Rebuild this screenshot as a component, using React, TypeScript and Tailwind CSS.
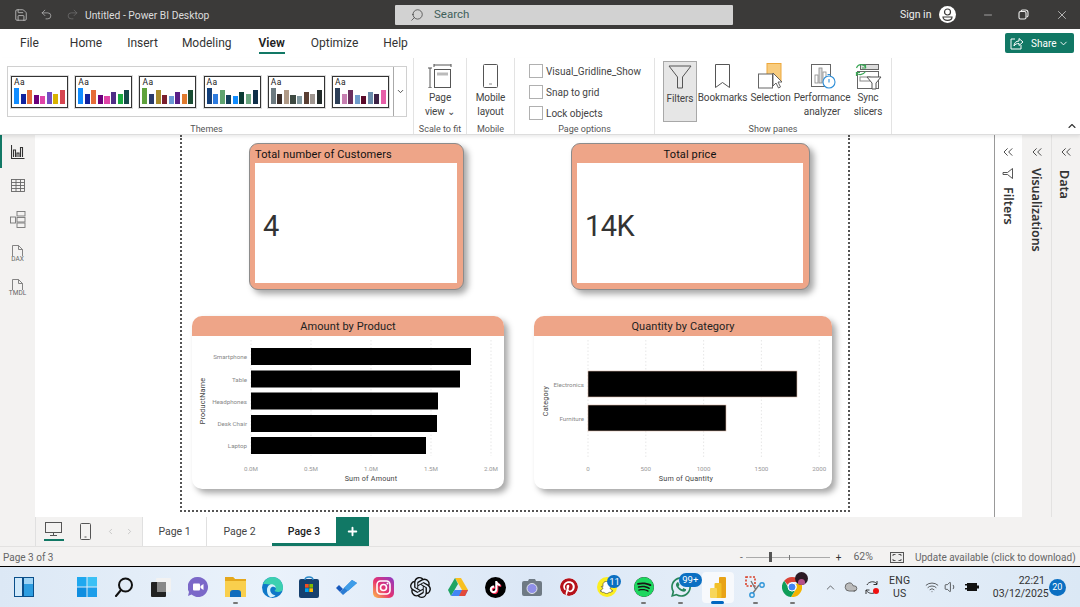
import React from "react";
import { Save, Undo2, Redo2, Search, Minus, X, ChevronDown, ChevronUp, ChevronsLeft, Plus, ChevronLeft, ChevronRight, Wifi, Volume1, Cloud } from "lucide-react";
import { SiOpenai, SiTiktok, SiSpotify, SiSnapchat, SiPinterest, SiWhatsapp } from "react-icons/si";

const themes: { c: string[] }[] = [
  { c: ["#118DFF", "#12239E", "#E66C37", "#6B007B", "#E044A7", "#744EC2", "#D9B300", "#D64550"] },
  { c: ["#118DFF", "#12239E", "#E66C37", "#6B007B", "#E044A7", "#4F2E86", "#1AAB40", "#15494A"] },
  { c: ["#5FA23C", "#2A3B6B", "#A88B2B", "#7A1F2E", "#6A9BD6", "#5A1F87", "#E07B2E", "#1A4D33"] },
  { c: ["#123F7A", "#2E7CE0", "#5FA36F", "#123F5A", "#118DFF", "#0B3A33", "#6AA57F", "#0F2F4A"] },
  { c: ["#6C7A80", "#3B2E2A", "#B09A87", "#3E4A42", "#8199A0", "#5A3F33", "#9F9690", "#222B2A"] },
  { c: ["#2C3E57", "#C77FB1", "#6B2F5E", "#6F9CCB", "#5B0A2A", "#6A8CAC", "#3E2346", "#E75FA8"] },
];
const barH = [16, 10, 14, 9, 8, 12, 10, 14];

function ThemeCard({ c }: { c: string[] }) {
  return (
    <div className="w-[57px] h-[32px] border border-[#333] bg-white flex flex-col px-[2px] shadow-[0_0_0_1px_#ddd]">
      <div className="text-[8.5px] leading-[11px] text-[#222] tracking-[0.5px] h-[11px]">Aa</div>
      <div className="flex items-end gap-[1.5px] h-[16px]">
        {c.map((x, i) => (
          <div key={i} className="flex-1" style={{ background: x, height: barH[i] }} />
        ))}
      </div>
    </div>
  );
}

function Group({ w, label, children }: { w: string; label: string; children: React.ReactNode }) {
  return (
    <div className={`${w} h-full flex flex-col border-r border-[#e3e3e3] shrink-0`}>
      <div className="h-[65px] flex">{children}</div>
      <div className="h-[12px] text-center text-[9px] leading-[14px] text-[#555]">{label}</div>
    </div>
  );
}

function Chk({ label }: { label: string }) {
  return (
    <div className="flex items-center h-[14px] gap-[3px]">
      <div className="w-[14px] h-[14px] border border-[#b0b0b0] bg-white" />
      <span className="mt-[1px] text-[10px] text-[#444]">{label}</span>
    </div>
  );
}

function Pane({ w, icon, l1, l2, active }: { w: string; icon: React.ReactNode; l1: string; l2?: string; active?: boolean }) {
  return (
    <div className={`${w} flex flex-col items-center h-[61px] mt-[3px] pt-[3px] ${active ? "bg-[#e6e6e6] border border-[#a8a8a8]" : ""}`}>
      <div className="h-[24px] flex items-center justify-center">{icon}</div>
      <div className="mt-[3px] text-[10px] leading-[14px] tracking-[-0.1px] text-[#444] text-center whitespace-nowrap">
        {l1}
        {l2 && <br />}
        {l2}
      </div>
    </div>
  );
}

function Card({ title, value, w, left, center }: { title: string; value: string; w: string; left: string; center?: boolean }) {
  return (
    <div className={`${w} ${left} h-[147px] shrink-0 rounded-[9px] bg-[#eea588] border border-[#8c8c8c] pl-[5px] pr-[6px] pb-[6px] flex flex-col shadow-[4px_4px_6px_rgba(0,0,0,0.35)]`}>
      <div className={`h-[19px] text-[11px] leading-[21px] tracking-[0.12px] text-[#111] ${center ? "text-center" : ""}`}>{title}</div>
      <div className="flex-1 bg-white flex items-center pl-[8px] pt-[8px] text-[29px] tracking-[-0.5px] text-[#333]">{value}</div>
    </div>
  );
}

const T = { fontFamily: "Roboto, sans-serif" };

function ChartOne() {
  const rows: [string, number, number][] = [
    ["Smartphone", 12, 220],
    ["Table", 34.5, 209],
    ["Headphones", 56.5, 187],
    ["Desk Chair", 79, 186],
    ["Laptop", 101, 175],
  ];
  const ticks = ["0.0M", "0.5M", "1.0M", "1.5M", "2.0M"];
  return (
    <svg width={312} height={153} viewBox="0 0 312 153" style={T}>
      {ticks.map((t, i) => (
        <g key={t}>
          <line x1={59 + i * 60} x2={59 + i * 60} y1={4} y2={120} stroke="#ddd" strokeWidth={0.7} strokeDasharray="1.5 2" />
          <text x={59 + i * 60} y={135} textAnchor="middle" fontSize={6.2} fill="#999">{t}</text>
        </g>
      ))}
      {rows.map(([n, y, w]) => (
        <g key={n}>
          <rect x={59} y={y} width={w} height={17} fill="#000" />
          <text x={55} y={y + 11} textAnchor="end" fontSize={6.2} fill="#888">{n}</text>
        </g>
      ))}
      <text x={179} y={145} textAnchor="middle" fontSize={7.2} fill="#444" letterSpacing={0.2}>Sum of Amount</text>
      <text transform="translate(12.5 65) rotate(-90)" textAnchor="middle" fontSize={7.2} fill="#444" letterSpacing={0.2}>ProductName</text>
    </svg>
  );
}

function ChartTwo() {
  const ticks = ["0", "500", "1000", "1500", "2000"];
  return (
    <svg width={298} height={153} viewBox="0 0 298 153" style={T}>
      {ticks.map((t, i) => (
        <g key={t}>
          <line x1={54 + i * 57.8} x2={54 + i * 57.8} y1={4} y2={122} stroke="#ddd" strokeWidth={0.7} strokeDasharray="1.5 2" />
          <text x={54 + i * 57.8} y={135} textAnchor="middle" fontSize={6.2} fill="#999">{t}</text>
        </g>
      ))}
      <rect x={54} y={35} width={209} height={26} fill="#000" stroke="#d9b8a8" strokeWidth={0.6} />
      <rect x={54} y={69} width={138} height={26} fill="#000" stroke="#d9b8a8" strokeWidth={0.6} />
      <text x={50} y={51} textAnchor="end" fontSize={6.2} fill="#888">Electronics</text>
      <text x={50} y={85} textAnchor="end" fontSize={6.2} fill="#888">Furniture</text>
      <text x={152} y={145} textAnchor="middle" fontSize={7.2} fill="#444" letterSpacing={0.2}>Sum of Quantity</text>
      <text transform="translate(13.5 65) rotate(-90)" textAnchor="middle" fontSize={7.2} fill="#444" letterSpacing={0.2}>Category</text>
    </svg>
  );
}

function ChartCard({ title, w, ml, children }: { title: string; w: string; ml: string; children: React.ReactNode }) {
  return (
    <div className={`${w} ${ml} h-[173px] shrink-0 rounded-[10px] bg-white overflow-hidden flex flex-col shadow-[4px_4px_6px_rgba(0,0,0,0.35)]`}>
      <div className="h-[20px] bg-[#eea588] text-center text-[11px] leading-[21px] tracking-[0.08px] text-[#222]">{title}</div>
      {children}
    </div>
  );
}

function Cell({ children, dot, active }: { children: React.ReactNode; dot?: boolean; active?: boolean }) {
  return (
    <div className="relative w-[37.15px] h-[40px] shrink-0 flex items-center justify-center">
      {active && <div className="absolute left-[3px] right-[3px] top-[5px] bottom-[4px] rounded-[4px] bg-[#f7f9fc]" />}
      {children}
      {dot && <div className="absolute bottom-[3px] w-[5px] h-[2px] rounded bg-[#777]" />}
      {active && <div className="absolute bottom-[3px] w-[13px] h-[3px] rounded bg-[#0067c0]" />}
    </div>
  );
}

function Badge({ text, pos }: { text: string; pos: string }) {
  return (
    <div className={`absolute ${pos} rounded-full bg-[#0b6fc2] text-white text-[9.5px] leading-[13px] text-center`}>{text}</div>
  );
}

export default function App() {
  return (
    <div className="w-[1080px] h-[607px] overflow-hidden flex flex-col bg-[#f3f2f1] font-[Roboto,sans-serif]">
      {/* title bar */}
      <div className="h-[29px] bg-[#3b3a39] flex items-center text-[#e6e6e6] shrink-0">
        <Save size={14} strokeWidth={1.2} className="ml-[14px] text-[#ddd]" />
        <Undo2 size={13} strokeWidth={1.2} className="ml-[12px] text-[#ccc]" />
        <Redo2 size={13} strokeWidth={1.2} className="ml-[13px] text-[#777]" />
        <span className="ml-[6px] mt-[2px] text-[10.3px] text-[#ddd] w-[123px] whitespace-nowrap">Untitled - Power BI Desktop</span>
        <div className="ml-[187px] w-[338px] h-[20px] bg-[#d2d2d2] rounded-[1px] flex items-center pl-[15px] text-[#3f5f5a] text-[11.5px]">
          <Search size={14} strokeWidth={1.2} className="-scale-x-100 text-[#333]" />
          <span className="ml-[10px] mt-[1px]">Search</span>
        </div>
        <span className="ml-[167px] mt-[1px] text-[10.5px] text-[#eee]">Sign in</span>
        <svg width="17" height="17" viewBox="0 0 17 17" className="ml-[8px]">
          <circle cx="8.5" cy="8.5" r="8.5" fill="#fff" />
          <circle cx="8.5" cy="6" r="3" fill="none" stroke="#3b3a39" strokeWidth="1.2" />
          <path d="M4 11h9c0 2-2 3.4-4.5 3.4S4 13 4 11z" fill="none" stroke="#3b3a39" strokeWidth="1.2" />
        </svg>
        <Minus size={12} strokeWidth={1.2} className="ml-[26px]" />
        <svg width="11" height="11" viewBox="0 0 11 11" className="ml-[24px]" fill="none" stroke="#eee" strokeWidth="1.1">
          <rect x="1" y="2.5" width="7" height="7.5" rx="1.5" />
          <path d="M3 2.5c0-1 .5-1.5 1.5-1.5h3c1.5 0 2.5 1 2.5 2.5v3c0 1-.5 1.5-1.5 1.5" />
        </svg>
        <X size={14} strokeWidth={1.2} className="ml-[26px]" />
      </div>

      {/* tabs */}
      <div className="h-[29px] bg-white flex items-center text-[12px] text-[#333] pl-[20px] pb-[1px] shrink-0">
        <span className="mr-[31px]">File</span>
        <span className="mr-[25px]">Home</span>
        <span className="mr-[24px]">Insert</span>
        <span className="mr-[27px]">Modeling</span>
        <span className="mr-[26px] relative font-semibold text-[#222]">
          View
          <div className="absolute left-0 right-0 -bottom-[2px] h-[2px] bg-[#117865]" />
        </span>
        <span className="mr-[25px]">Optimize</span>
        <span>Help</span>
        <div className="ml-auto mr-[6px] w-[69px] h-[20px] bg-[#117865] rounded-[2px] flex items-center text-white text-[10px] pl-[5px]">
          <svg width="14" height="13" viewBox="0 0 14 13" fill="none" stroke="#fff" strokeWidth="1">
            <path d="M5 2H1v10h10V8" />
            <path d="M4 9c0-3 2-5 5-5V1.5L13 5 9 8.5V6.5C7 6.5 5 7 4 9z" />
          </svg>
          <span className="ml-[7px]">Share</span>
          <ChevronDown size={11} className="ml-[2px]" />
        </div>
      </div>

      {/* ribbon */}
      <div className="h-[77px] bg-white flex shrink-0 border-b border-[#ddd] shadow-[0_2px_3px_rgba(0,0,0,0.08)] relative z-10">
        <Group w="w-[414px]" label="Themes">
          <div className="ml-[7px] mt-[8px] w-[400px] h-[51px] border border-[#d0d0d0] flex shrink-0">
            <div className="w-[386px] flex items-center gap-[7.2px] pl-[3px] border-r border-[#aaa]">
              {themes.map((t, i) => (
                <ThemeCard key={i} c={t.c} />
              ))}
            </div>
            <div className="flex-1 flex items-center justify-center">
              <ChevronDown size={9} strokeWidth={2.4} className="text-[#444]" />
            </div>
          </div>
        </Group>
        <Group w="w-[53px]" label="Scale to fit">
          <div className="w-full">
            <Pane
              w="w-full"
              icon={
                <svg width="24" height="24" viewBox="0 0 24 24" fill="none" stroke="#555" strokeWidth="1">
                  <path d="M6 1h17M6 0v3M23 0v3M0 4h4M2 4v20M0 24h4" />
                  <rect x="6.5" y="5.5" width="16" height="18" />
                  <rect x="9" y="8.5" width="11" height="3" fill="#bbb" stroke="none" />
                </svg>
              }
              l1="Page"
              l2="view ⌄"
            />
          </div>
        </Group>
        <Group w="w-[48px]" label="Mobile">
          <div className="w-full">
            <Pane
              w="w-full"
              icon={
                <svg width="15" height="24" viewBox="0 0 15 24" fill="none" stroke="#555" strokeWidth="1">
                  <rect x="0.5" y="0.5" width="14" height="23" rx="1" />
                  <path d="M6 20h3" stroke="#888" />
                </svg>
              }
              l1="Mobile"
              l2="layout"
            />
          </div>
        </Group>
        <Group w="w-[140px]" label="Page options">
          <div className="pl-[14px] pt-[6px] flex flex-col gap-[7px]">
            <Chk label="Visual_Gridline_Show" />
            <Chk label="Snap to grid" />
            <Chk label="Lock objects" />
          </div>
        </Group>
        <Group w="w-[237px]" label="Show panes">
          <div className="pl-[8px] flex">
            <Pane
              w="w-[34px]"
              active
              icon={
                <svg width="24" height="24" viewBox="0 0 24 24" fill="none" stroke="#555" strokeWidth="1">
                  <path d="M1 1h22L14.5 12v11h-5V12z" />
                </svg>
              }
              l1="Filters"
            />
            <Pane
              w="w-[51px]"
              icon={
                <svg width="15" height="24" viewBox="0 0 15 24" fill="none" stroke="#555" strokeWidth="1">
                  <path d="M.5.5h14v23l-7-5-7 5z" />
                </svg>
              }
              l1="Bookmarks"
            />
            <Pane
              w="w-[45px]"
              icon={
                <svg width="26" height="27" viewBox="0 0 26 27">
                  <rect x="9" y="0.5" width="14" height="17" fill="#f8cc7e" stroke="#eda83c" />
                  <rect x="0.5" y="11" width="14" height="14" fill="#fff" stroke="#666" />
                  <path d="M15 10v13l3-3 2.5 5 2-1-2.5-5h4z" fill="#fff" stroke="#555" strokeWidth="0.9" />
                </svg>
              }
              l1="Selection"
            />
            <Pane
              w="w-[58px]"
              icon={
                <svg width="25" height="25" viewBox="0 0 25 25" className="ml-[3px]">
                  <rect x="0.5" y="0.5" width="19" height="22" fill="#fff" stroke="#666" />
                  <rect x="4" y="11" width="3" height="8" fill="#fff" stroke="#888" strokeWidth="0.8" />
                  <rect x="8" y="4" width="3" height="15" fill="#ddd" stroke="#888" strokeWidth="0.8" />
                  <rect x="12" y="8" width="3" height="11" fill="#fff" stroke="#888" strokeWidth="0.8" />
                  <circle cx="18" cy="18" r="6" fill="#fff" stroke="#2f8fd8" strokeWidth="1.1" />
                  <path d="M18 15v3.5M16.5 10.5h3" stroke="#2f8fd8" strokeWidth="1.1" />
                </svg>
              }
              l1="Performance"
              l2="analyzer"
            />
            <Pane
              w="w-[34px]"
              icon={
                <svg width="27" height="27" viewBox="0 0 27 27" fill="none">
                  <rect x="5.5" y="1.5" width="18" height="5" fill="#ddd" stroke="#666" />
                  <rect x="2.5" y="8.5" width="21" height="17" fill="#fff" stroke="#666" />
                  <rect x="5" y="14" width="10" height="4" stroke="#888" />
                  <path d="M12 14h14l-5 6v6h-4v-6z" fill="#fff" stroke="#555" />
                  <path d="M11 4.5C9 .5 3 .5 1.5 5M1 9.5c2 3 7 3 9.5-1M10.5 1.5v3.5H7M1.5 13V9.5H5" stroke="#3aa655" strokeWidth="1.2" />
                </svg>
              }
              l1="Sync"
              l2="slicers"
            />
          </div>
        </Group>
        <div className="flex-1 relative">
          <ChevronUp size={12} strokeWidth={2.2} className="absolute right-[2px] bottom-[2px] text-[#333]" />
        </div>
      </div>

      {/* main */}
      <div className="h-[382px] flex shrink-0">
        <div className="w-[35px] bg-[#f3f2f1] flex flex-col items-center shrink-0 relative">
          <div className="absolute left-0 top-0 w-[2px] h-[33px] bg-[#117865]" />
          <div className="h-[33px] flex items-center">
            <svg width="14" height="14" viewBox="0 0 14 14" fill="none" stroke="#333" strokeWidth="1.1">
              <path d="M.5 0v13.5h13" />
              <path d="M2.5 12V5h2v7M6 12V8h2v4M9.5 12V2.5h2V12" />
            </svg>
          </div>
          <div className="h-[34px] flex items-center">
            <svg width="14" height="13" viewBox="0 0 14 13" fill="none" stroke="#666" strokeWidth="0.9">
              <rect x=".5" y=".5" width="13" height="12" />
              <path d="M.5 3.5h13M.5 6.5h13M.5 9.5h13M5 .5v12M9.5 .5v12" />
            </svg>
          </div>
          <div className="h-[34px] flex items-center">
            <svg width="16" height="17" viewBox="0 0 16 17" fill="none" stroke="#777" strokeWidth="0.9">
              <rect x="7" y=".5" width="8" height="4.5" />
              <rect x="7" y="6.5" width="8" height="4.5" />
              <rect x="7" y="12" width="8" height="4.5" />
              <rect x=".5" y="6" width="5" height="6" />
            </svg>
          </div>
          <div className="h-[34px] flex flex-col items-center justify-center">
            <svg width="11" height="11" viewBox="0 0 11 11" fill="none" stroke="#777" strokeWidth="0.9">
              <path d="M.5 11V.5h6l4 4V11M6.5 .5v4h4" />
            </svg>
            <span className="text-[6.5px] leading-[6px] text-[#666]">DAX</span>
          </div>
          <div className="h-[34px] flex flex-col items-center justify-center">
            <svg width="11" height="11" viewBox="0 0 11 11" fill="none" stroke="#777" strokeWidth="0.9">
              <path d="M.5 11V.5h6l4 4V11M6.5 .5v4h4" />
            </svg>
            <span className="text-[6.5px] leading-[6px] text-[#666]">TMDL</span>
          </div>
        </div>

        <div className="w-[959px] bg-white shrink-0 overflow-hidden">
          <div className="ml-[145px] w-[670px] h-[377px] border-x-2 border-b-2 border-dotted border-[#555] flex flex-col pt-[8px]">
            <div className="flex">
              <Card title="Total number of Customers" value="4" w="w-[215px]" left="ml-[67px]" />
              <Card title="Total price" value="14K" w="w-[239px]" left="ml-[107px]" center />
            </div>
            <div className="flex mt-[26px]">
              <ChartCard title="Amount by Product" w="w-[312px]" ml="ml-[10px]">
                <ChartOne />
              </ChartCard>
              <ChartCard title="Quantity by Category" w="w-[298px]" ml="ml-[30px]">
                <ChartTwo />
              </ChartCard>
            </div>
          </div>
        </div>

        <div className="w-[28px] bg-white border-l border-[#999] flex flex-col items-center shrink-0 pt-[9px]">
          <ChevronsLeft size={16} strokeWidth={1.2} className="text-[#222] -ml-[2px]" />
          <svg width="11" height="11" viewBox="0 0 11 11" fill="none" stroke="#444" strokeWidth="0.9" className="mt-[8px] rotate-90 -ml-[2px]">
            <path d="M.5 .5h10L6.5 5.5V10h-2V5.5z" />
          </svg>
          <span className="mt-[8px] -ml-[2px] [writing-mode:vertical-rl] text-[12.5px] font-semibold font-['Noto_Sans',sans-serif] text-[#333]">Filters</span>
        </div>
        <div className="w-[30px] bg-[#f3f2f1] flex flex-col items-center shrink-0 pt-[9px] border-r border-[#e3e2e1]">
          <ChevronsLeft size={16} strokeWidth={1.2} className="text-[#222]" />
          <span className="mt-[8px] -ml-[1px] [writing-mode:vertical-rl] text-[12.5px] font-semibold font-['Noto_Sans',sans-serif] text-[#333]">Visualizations</span>
        </div>
        <div className="flex-1 bg-[#f3f2f1] flex flex-col items-center pt-[9px]">
          <ChevronsLeft size={16} strokeWidth={1.2} className="text-[#222]" />
          <span className="mt-[10px] -ml-[4px] [writing-mode:vertical-rl] text-[12.5px] font-semibold font-['Noto_Sans',sans-serif] text-[#333]">Data</span>
        </div>
      </div>

      {/* page tabs */}
      <div className="h-[30px] flex shrink-0 border-b border-[#e3e2e1] bg-[#f3f2f1] pl-[35px]">
        <div className="w-[108px] h-full flex items-center border-l border-[#e0e0e0] border-r">
          <div className="relative ml-[7px] w-[21px] h-full flex items-start justify-center pt-[5px]">
            <svg width="17" height="14" viewBox="0 0 17 14" fill="none" stroke="#555" strokeWidth="1">
              <rect x=".5" y=".5" width="16" height="10" />
              <path d="M8.5 11v2M5 13.5h7" />
            </svg>
            <div className="absolute bottom-[5px] w-[20px] h-[2px] bg-[#117865]" />
          </div>
          <svg width="11" height="17" viewBox="0 0 11 17" fill="none" stroke="#555" strokeWidth="1" className="ml-[16px]">
            <rect x=".5" y=".5" width="10" height="16" rx="1" />
            <path d="M4.5 14h2" />
          </svg>
          <ChevronLeft size={9} strokeWidth={2} className="ml-[15px] text-[#bbb]" />
          <ChevronRight size={9} strokeWidth={2} className="ml-[10px] text-[#bbb]" />
        </div>
        <div className="w-[64px] bg-white border-r border-[#e0e0e0] flex items-center justify-center pt-[1px] text-[10.5px] text-[#444]">Page 1</div>
        <div className="w-[65px] bg-white flex items-center justify-center pt-[1px] text-[10.5px] text-[#444]">Page 2</div>
        <div className="w-[64px] bg-white border-b-[3px] border-[#117865] flex items-center justify-center pt-[3px] text-[10.5px] text-[#222] font-medium">Page 3</div>
        <div className="w-[33px] bg-[#117865] flex items-center justify-center">
          <Plus size={13} strokeWidth={3.5} className="text-white" />
        </div>
      </div>

      {/* status */}
      <div className="h-[20px] flex items-center shrink-0 text-[10px] text-[#666] border-b border-black pl-[3px] pt-[1px]">
        <span className="w-[51px]">Page 3 of 3</span>
        <div className="ml-[686px] flex items-center">
          <span>-</span>
          <div className="ml-[3px] w-[84px] h-[1px] bg-[#aaa] relative">
            <div className="absolute left-[23px] -top-[5px] w-[3px] h-[10px] bg-[#555]" />
            <div className="absolute left-[43px] -top-[2px] w-[1px] h-[5px] bg-[#777]" />
          </div>
          <span className="ml-[6px] text-[#333]">+</span>
          <span className="ml-[12px] text-[10.5px]">62%</span>
          <svg width="14" height="11" viewBox="0 0 14 11" fill="none" stroke="#555" className="ml-[17px]">
            <rect x=".5" y=".5" width="13" height="10" fill="#ececec" />
            <path d="M3 4V2.5h2.5M8.5 2.5H11V4M11 7v1.5H8.5M5.5 8.5H3V7" />
          </svg>
          <span className="ml-[11px] whitespace-nowrap text-[#666]">Update available (click to download)</span>
        </div>
      </div>

      {/* taskbar */}
      <div className="h-[40px] flex items-center shrink-0 bg-[linear-gradient(90deg,#dce8f5,#eaf2fb_25%,#dbe7f6_50%,#e8f0f9_72%,#dbe8f5)]">
        <div className="ml-[14px] w-[20px] h-[20px] border border-[#0a4f8a] flex shrink-0">
          <div className="w-[9px] bg-[#cfe8fa] border-r-[2px] border-[#0a4f8a]" />
          <div className="flex-1 flex flex-col">
            <div className="h-[6px] bg-[#9fd4f5]" />
            <div className="flex-1 bg-[#2d9de0]" />
          </div>
        </div>
        <div className="ml-[34px] flex">
          <Cell>
            <svg width="20" height="20" viewBox="0 0 20 20">
              <rect width="9.5" height="9.5" fill="#1fa8ef" />
              <rect x="10.5" width="9.5" height="9.5" fill="#3cc1f5" />
              <rect y="10.5" width="9.5" height="9.5" fill="#0f8ee0" />
              <rect x="10.5" y="10.5" width="9.5" height="9.5" fill="#1d9eea" />
            </svg>
          </Cell>
          <Cell>
            <svg width="20" height="20" viewBox="0 0 20 20" fill="none" stroke="#111" strokeWidth="2">
              <circle cx="11.5" cy="8" r="6.5" />
              <path d="M7 13l-5 6" strokeLinecap="round" />
            </svg>
          </Cell>
          <Cell>
            <svg width="20" height="20" viewBox="0 0 20 20">
              <rect x="5" y="1" width="15" height="14" rx="1" fill="#f2f2f2" />
              <rect y="5" width="15" height="15" rx="1" fill="#222" />
              <rect x="6" y="5" width="9" height="10" fill="#888" />
            </svg>
          </Cell>
          <Cell>
            <svg width="20" height="20" viewBox="0 0 20 20">
              <path d="M10 0a10 10 0 1 1-6.5 17.6L0 19l1-4A10 10 0 0 1 10 0z" fill="#7b68c8" />
              <rect x="5" y="6.5" width="7" height="7" rx="1" fill="#fff" />
              <path d="M12.5 9l3-2v6l-3-2z" fill="#fff" />
            </svg>
          </Cell>
          <Cell dot>
            <svg width="21" height="20" viewBox="0 0 21 20">
              <path d="M0 0h8l2 2h11v18H0z" fill="#f9cf4d" />
              <path d="M0 0h8l2 2h11v2H0z" fill="#e4a71c" />
              <path d="M5 16c0-2 1-3 3-3h5c2 0 3 1 3 3v4H5z" fill="#0f6cbd" />
            </svg>
          </Cell>
          <Cell>
            <svg width="21" height="21" viewBox="0 0 21 21">
              <circle cx="10.5" cy="10.5" r="10.5" fill="#0f78c8" />
              <path d="M1 7C3 2 7 0 10.5 0 17 0 21 5 21 11c0 3-2.5 4-5 4-2 0-3-.6-3.5-1.2 1.5-.8 1.8-2.5.8-3.8C11 7 4 7 1 7z" fill="#3cd0b0" />
              <path d="M5 13c0-4 3-6.5 6-5.5 2 .7 3 2 2.5 3.5-1-1.500-4-2-5 .5-1 3 1 6 5 7-1.500 1.500-4 2-5.500 1.500C5.500 18.500 5 15 5 13z" fill="#d8f2fb" />
            </svg>
          </Cell>
          <Cell>
            <svg width="20" height="22" viewBox="0 0 20 22">
              <rect y="3" width="20" height="19" rx="2" fill="#16406e" />
              <path d="M6 4c0-4 8-4 8 0" fill="none" stroke="#2a88c8" strokeWidth="1.4" />
              <rect x="6" y="8" width="3.7" height="3.7" fill="#f25022" />
              <rect x="10.3" y="8" width="3.7" height="3.7" fill="#7fba00" />
              <rect x="6" y="12.3" width="3.7" height="3.7" fill="#00a4ef" />
              <rect x="10.3" y="12.3" width="3.7" height="3.7" fill="#ffb900" />
            </svg>
          </Cell>
          <Cell>
            <svg width="21" height="16" viewBox="0 0 21 16">
              <path d="M0 9l3-3 4 4-3 3z" fill="#185abd" />
              <path d="M4 13L16 1l5 3L7 16z" fill="#2b7cd3" />
              <path d="M8 9l8-8 5 3-9 8z" fill="#3f9de8" />
            </svg>
          </Cell>
          <Cell>
            <svg width="21" height="21" viewBox="0 0 21 21">
              <defs>
                <linearGradient id="ig" x1="0" y1="1" x2="1" y2="0">
                  <stop offset="0" stopColor="#fdc04a" />
                  <stop offset="0.45" stopColor="#e8336e" />
                  <stop offset="1" stopColor="#8a3ac8" />
                </linearGradient>
              </defs>
              <rect width="21" height="21" rx="5" fill="url(#ig)" />
              <rect x="4" y="4" width="13" height="13" rx="3.5" fill="none" stroke="#fff" strokeWidth="1.6" />
              <circle cx="10.5" cy="10.5" r="3" fill="none" stroke="#fff" strokeWidth="1.6" />
              <circle cx="14.5" cy="6.5" r="1" fill="#fff" />
            </svg>
          </Cell>
          <Cell>
            <SiOpenai size={21} className="text-[#111]" />
          </Cell>
          <Cell>
            <svg width="20" height="18" viewBox="0 0 20 18">
              <path d="M7 0h6l7 12h-6z" fill="#f8c021" />
              <path d="M7 0L0 12l3 6 7-12z" fill="#1fa463" />
              <path d="M6.5 12H20l-3 6H3z" fill="#4285f4" />
              <path d="M14 12h6l-3 6h-6z" fill="#e24a3b" />
            </svg>
          </Cell>
          <Cell>
            <div className="w-[21px] h-[21px] rounded-full bg-black flex items-center justify-center">
              <SiTiktok size={12} className="text-white drop-shadow-[1px_1px_0_#fe2c55]" />
            </div>
          </Cell>
          <Cell>
            <svg width="20" height="17" viewBox="0 0 20 17">
              <path d="M6 2l1-2h6l1 2h4a2 2 0 0 1 2 2v11a2 2 0 0 1-2 2H2a2 2 0 0 1-2-2V4a2 2 0 0 1 2-2z" fill="#6f7a84" />
              <circle cx="10" cy="9.5" r="5" fill="#8f8fe8" stroke="#e0e4ea" strokeWidth="1" />
            </svg>
          </Cell>
          <Cell>
            <SiPinterest size={18} className="text-[#b5121b] bg-white rounded-full" />
          </Cell>
          <Cell>
            <div className="w-[20px] h-[20px] rounded-full bg-[#fcee21] flex items-center justify-center">
              <SiSnapchat size={13} className="text-white stroke-[#222] stroke-[1px]" />
            </div>
            <Badge text="11" pos="left-[19.5px] top-[8px] w-[14px] h-[13px]" />
          </Cell>
          <Cell dot>
            <SiSpotify size={20} className="text-[#1ed760] bg-[#191414] rounded-full" />
          </Cell>
          <Cell dot>
            <SiWhatsapp size={20} className="text-[#25855a]" />
            <Badge text="99+" pos="left-[16.5px] top-[6px] w-[23px] h-[14px]" />
          </Cell>
          <Cell active>
            <svg width="16" height="21" viewBox="0 0 16 21" className="relative">
              <rect x="9" y="0" width="7" height="21" rx="1" fill="#e8a317" />
              <rect x="4.5" y="6" width="7" height="15" rx="1" fill="#f2c027" />
              <rect x="0" y="11" width="7" height="10" rx="1" fill="#f7d65a" />
            </svg>
          </Cell>
          <Cell dot>
            <svg width="20" height="22" viewBox="0 0 20 22" fill="none">
              <rect x="1" y="1" width="9" height="9" stroke="#d9412a" strokeWidth="1.6" strokeDasharray="2 1.5" />
              <path d="M6 5l5 9M14 9l-6 8" stroke="#777" strokeWidth="1.4" />
              <circle cx="17" cy="9" r="2.2" stroke="#2f95d8" strokeWidth="1.4" />
              <circle cx="7" cy="19" r="2.2" stroke="#2f95d8" strokeWidth="1.4" />
            </svg>
          </Cell>
          <Cell dot>
            <div className="relative">
              <svg width="20" height="20" viewBox="0 0 20 20">
                <path d="M10 0a10 10 0 0 1 8.7 5H10a5 5 0 0 0-4.5 2.8L2.2 3.800A10 10 0 0 1 10 0z" fill="#db4437" />
                <path d="M18.7 5A10 10 0 0 1 9 20l4.5-7A5 5 0 0 0 14 7z" fill="#f4b400" />
                <path d="M2.2 3.8L6 10a4.500 4.500 0 0 0 7 3.500L9 20A10 10 0 0 1 2.200 3.800z" fill="#0f9d58" />
                <circle cx="10" cy="10" r="4" fill="#4285f4" stroke="#fff" strokeWidth="1" />
              </svg>
              <div className="absolute -top-[5px] -right-[6px] w-[13px] h-[13px] rounded-full bg-[#2b1a24] flex items-end justify-center overflow-hidden">
                <div className="w-[7px] h-[6px] rounded-t-full bg-[#b5508a]" />
              </div>
            </div>
          </Cell>
        </div>
        <ChevronUp size={13} strokeWidth={1.2} className="ml-[13px] text-[#222]" />
        <Cloud size={14} strokeWidth={1.2} className="ml-[7px] text-[#444] fill-[#bbb]" />
        <div className="relative ml-[7px] w-[14px] h-[15px]">
          <svg width="14" height="15" viewBox="0 0 14 15" fill="none" stroke="#333" strokeWidth="1">
            <path d="M2 5c1-3 7-5 10-1M12 1v3.5H8.5M1 10c2 3 5 4 8 3M1 14v-4h3.5" />
          </svg>
          <div className="absolute right-0 bottom-[1px] w-[6px] h-[6px] rounded-full bg-[#f01010]" />
        </div>
        <div className="ml-[7px] w-[28px] text-center text-[10.5px] leading-[13px] text-[#333] tracking-[0.3px]">
          ENG
          <br />
          US
        </div>
        <Wifi size={14} strokeWidth={1.2} className="ml-[11px] text-[#222]" />
        <Volume1 size={14} strokeWidth={1.2} className="ml-[5px] text-[#222]" />
        <svg width="14" height="10" viewBox="0 0 14 10" className="ml-[7px]">
          <rect x="2" y="1" width="10" height="8" fill="#111" />
          <rect x="0" y="2" width="3" height="1.5" fill="#111" />
          <rect x="0" y="6" width="3" height="1.5" fill="#111" />
          <rect x="12" y="3.5" width="2" height="3" fill="#111" />
        </svg>
        <div className="ml-[14px] w-[52px] text-right text-[10.5px] leading-[13px] text-[#333] whitespace-nowrap">
          22:21
          <br />
          03/12/2025
        </div>
        <div className="ml-[4px] w-[17px] h-[17px] rounded-full bg-[#0b6fc2] text-white text-[9px] leading-[17px] text-center">20</div>
      </div>
    </div>
  );
}
